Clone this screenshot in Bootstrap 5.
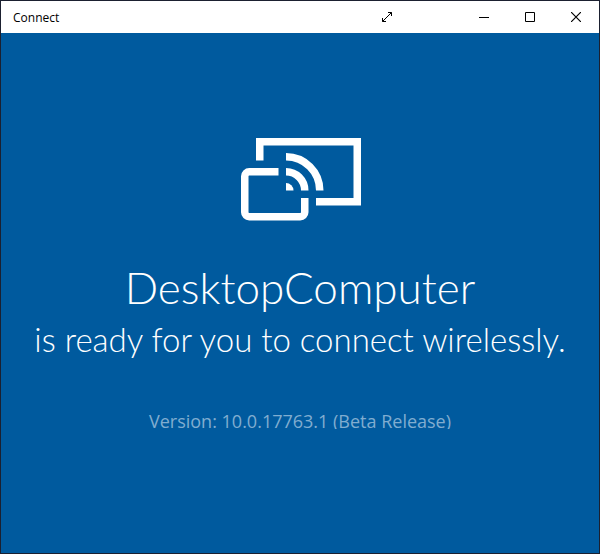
<!DOCTYPE html>
<html lang="en">
<head>
<meta charset="utf-8">
<meta name="viewport" content="width=device-width, initial-scale=1">
<title>Connect</title>
<link href="https://cdn.jsdelivr.net/npm/bootstrap@5.3.0/dist/css/bootstrap.min.css" rel="stylesheet">
<style>
body { font-family: "Open Sans", "Noto Sans", sans-serif; background: #005a9e; }
.app-window { border: 1px solid #1b2030; background: #005a9e; }
.title-bar { height: 32px; color: #000; }
.window-title { font-family: "Open Sans", sans-serif; font-size: 12px; line-height: 16px; padding-left: 12px; padding-top: 1px; }
.caption-btn { width: 46px; height: 32px; color: #000; }
.caption-btn:hover { background: #e5e5e5; }
.caption-gap { margin-right: 51px; }
.stage { padding-top: 105px; }
.device-name { font-family: Lato, "Open Sans", sans-serif; font-size: 44px; line-height: 60px; font-weight: 300; margin-top: 36px; }
.status-line { font-family: Lato, "Open Sans", sans-serif; font-size: 33px; line-height: 44px; font-weight: 300; }
.version-line { font-size: 18px; line-height: 24px; height: 20px; margin-top: 48px; color: #80add0; }
</style>
<script src="https://cdn.jsdelivr.net/npm/bootstrap@5.3.0/dist/js/bootstrap.bundle.min.js"></script>
</head>
<body>
<div class="app-window d-flex flex-column min-vh-100">
  <header class="title-bar d-flex align-items-center bg-white">
    <span class="window-title me-auto">Connect</span>
    <button type="button" class="caption-btn caption-gap btn p-0 border-0 rounded-0 d-flex align-items-center justify-content-center" aria-label="Full screen">
      <svg width="12" height="12" viewBox="0 0 12 12" fill="none" stroke="currentColor" aria-hidden="true"><path d="M1.5 10.5l9-9M7 1.5h3.500V5M1.500 7v3.500H5"/></svg>
    </button>
    <button type="button" class="caption-btn btn p-0 border-0 rounded-0 d-flex align-items-center justify-content-center" aria-label="Minimize">
      <svg width="10" height="10" viewBox="0 0 10 10" fill="none" stroke="currentColor" aria-hidden="true"><path d="M0 5.500h10"/></svg>
    </button>
    <button type="button" class="caption-btn btn p-0 border-0 rounded-0 d-flex align-items-center justify-content-center" aria-label="Maximize">
      <svg width="10" height="10" viewBox="0 0 10 10" fill="none" stroke="currentColor" aria-hidden="true"><path d="M.5.5h9v9h-9z"/></svg>
    </button>
    <button type="button" class="caption-btn btn p-0 border-0 rounded-0 d-flex align-items-center justify-content-center" aria-label="Close">
      <svg width="10" height="10" viewBox="0 0 10 10" fill="none" stroke="currentColor" stroke-width="1.200" aria-hidden="true"><path d="M0 0l10 10M10 0L0 10"/></svg>
    </button>
  </header>
  <main class="stage flex-grow-1 text-center text-white">
    <svg class="d-block mx-auto" width="122" height="83" viewBox="-2 0 122 83" fill="none" stroke="#fff" stroke-width="7.500" aria-hidden="true">
      <path d="M18.750 22.500V3.750h97.500v60H75"/>
      <path d="M37.500 33.750H8.250a4.500 4.500 0 0 0-4.500 4.500v36a4.500 4.500 0 0 0 4.500 4.500h51a4.500 4.500 0 0 0 4.500-4.500V60"/>
      <path d="M45 18.750A33.750 33.750 0 0 1 78.750 52.500M45 33.750A18.750 18.750 0 0 1 63.750 52.500"/>
      <path d="M45 45a7.500 7.500 0 0 1 7.500 7.500H45z" fill="#fff" stroke="none"/>
    </svg>
    <h1 class="device-name mb-0">DesktopComputer</h1>
    <p class="status-line mb-0 text-nowrap">is ready for you to connect wirelessly.</p>
    <p class="version-line mb-0 overflow-hidden">Version: 10.0.17763.1 (Beta Release)</p>
  </main>
</div>
</body>
</html>
